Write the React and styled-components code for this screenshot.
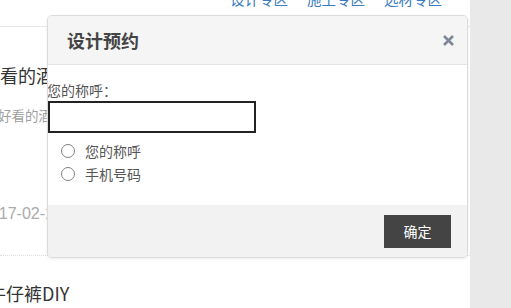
import React from "react";
import styled, { createGlobalStyle } from "styled-components";

const Global = createGlobalStyle`
  html, body { margin: 0; padding: 0; background: #fff; }
  body {
    font-family: "Microsoft YaHei", "Noto Sans CJK SC", "Liberation Sans", sans-serif;
    overflow: hidden;
  }
`;

const Page = styled.div`
  position: relative;
  width: 511px;
  height: 308px;
  display: flex;
  overflow: hidden;
`;

const Main = styled.div`
  width: 470px;
  display: flex;
  flex-direction: column;
  overflow: hidden;
`;

const Side = styled.div`
  flex: 1;
  background: #e9e9e9;
`;

const Nav = styled.nav`
  display: flex;
  gap: 19px;
  padding-left: 230px;
  margin-top: -11px;
  height: 37px;
  border-bottom: 1px solid #e6e6e6;
`;

const NavLink = styled.a`
  font-size: 14.5px;
  line-height: 20px;
  color: #3b7bc0;
  text-decoration: none;
  white-space: nowrap;
`;

const Article = styled.div`
  display: flex;
  flex-direction: column;
  padding-top: ${(p) => p.$top}px;
  border-bottom: ${(p) => (p.$dotted ? "1px dotted #ddd" : "none")};
  white-space: nowrap;
`;

const Title = styled.div`
  font-size: 18px;
  line-height: 24px;
  color: #333;
  margin-left: ${(p) => p.$shift}px;
`;

const Desc = styled.div`
  margin-top: 18px;
  font-size: 13.5px;
  line-height: 20px;
  color: #a0a0a0;
  margin-left: -2px;
`;

const PostDate = styled.div`
  margin-top: 79px;
  margin-bottom: 31px;
  font-family: "Liberation Sans", "Noto Sans CJK SC", sans-serif;
  font-size: 16px;
  line-height: 20px;
  color: #aaa;
  margin-left: -19px;
`;

const Modal = styled.div`
  position: absolute;
  left: 47px;
  top: 15px;
  width: 419px;
  height: 241px;
  border: 1px solid #dcdcdc;
  border-radius: 5px;
  background: #fff;
  box-shadow: 0 1px 3px rgba(0, 0, 0, 0.08);
  display: flex;
  flex-direction: column;
  overflow: hidden;
`;

const Header = styled.div`
  height: 48px;
  flex: none;
  background: #f5f5f5;
  border-bottom: 1px solid #e3e3e3;
  display: flex;
  align-items: center;
  justify-content: space-between;
  padding: 0 12px 0 19px;
`;

const HeaderTitle = styled.h3`
  margin: 0;
  font-size: 18px;
  font-weight: bold;
  color: #444;
`;

const Close = styled.button`
  border: none;
  background: none;
  padding: 0;
  width: 14px;
  height: 14px;
  display: flex;
  align-items: center;
  justify-content: center;
  cursor: pointer;
`;

const Body = styled.div`
  flex: 1;
  display: flex;
  flex-direction: column;
  padding-top: 15px;
`;

const Label = styled.label`
  font-size: 14px;
  line-height: 20px;
  color: #555;
  margin-left: -1px;
`;

const Input = styled.input`
  box-sizing: border-box;
  width: 208px;
  height: 32px;
  margin-top: 1px;
  border: 2px solid #222;
  border-radius: 0;
  outline: none;
  padding: 0 6px;
`;

const Options = styled.div`
  display: flex;
  flex-direction: column;
  gap: 3px;
  margin-top: 8px;
  padding-left: 13px;
`;

const Option = styled.label`
  display: flex;
  align-items: center;
  gap: 10px;
  height: 20px;
  font-size: 14px;
  color: #555;
`;

const Radio = styled.span`
  box-sizing: border-box;
  width: 14px;
  height: 14px;
  border: 1.5px solid #808080;
  border-radius: 50%;
  background: #fff;
`;

const Footer = styled.div`
  height: 52px;
  flex: none;
  background: #f2f2f2;
  display: flex;
  align-items: center;
  justify-content: flex-end;
  padding-right: 16px;
`;

const Confirm = styled.button`
  width: 67px;
  height: 33px;
  border: none;
  background: #444;
  color: #fff;
  font-family: inherit;
  font-size: 14px;
  cursor: pointer;
`;

export default function App() {
  return (
    <>
      <Global />
      <Page>
        <Main>
          <Nav>
            <NavLink href="#">设计专区</NavLink>
            <NavLink href="#">施工专区</NavLink>
            <NavLink href="#">选材专区</NavLink>
          </Nav>
          <Article $top={36} $dotted>
            <Title $shift={-18}>好看的酒柜设计</Title>
            <Desc>好看的酒柜，让家更有品位</Desc>
            <PostDate>2017-02-15</PostDate>
          </Article>
          <Article $top={25}>
            <Title $shift={-12}>牛仔裤DIY</Title>
          </Article>
        </Main>
        <Side />
        <Modal>
          <Header>
            <HeaderTitle>设计预约</HeaderTitle>
            <Close aria-label="关闭">
              <svg width="13" height="13" viewBox="0 0 13 13">
                <path d="M2 2 L11 11 M11 2 L2 11" stroke="#7d8796" strokeWidth="2.6" strokeLinecap="butt" />
              </svg>
            </Close>
          </Header>
          <Body>
            <Label>您的称呼：</Label>
            <Input type="text" />
            <Options>
              <Option><Radio />您的称呼</Option>
              <Option><Radio />手机号码</Option>
            </Options>
          </Body>
          <Footer>
            <Confirm>确定</Confirm>
          </Footer>
        </Modal>
      </Page>
    </>
  );
}
